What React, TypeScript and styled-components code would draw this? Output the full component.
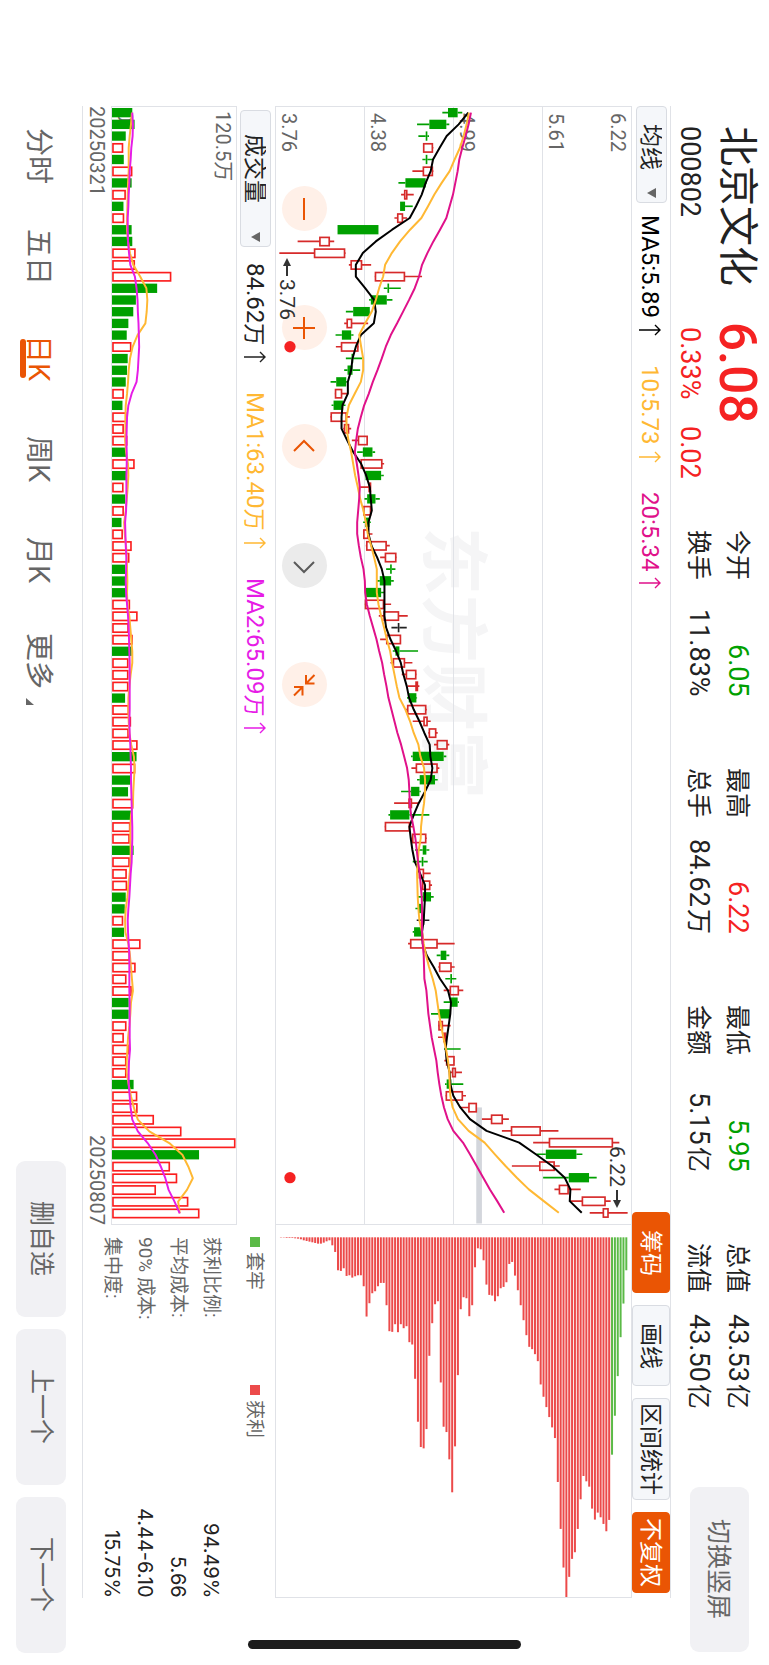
import React from "react";
import styled, { createGlobalStyle } from "styled-components";

const GlobalStyle = createGlobalStyle`
  *, *::before, *::after { box-sizing: border-box; }
  html, body { margin: 0; padding: 0; background: #fff; }
  button, select { font: inherit; color: inherit; margin: 0; writing-mode: inherit; text-orientation: inherit; }
`;

const color = {
  ink: "#222",
  grey: "#666",
  line: "#e0e2e7",
  up: "#d62a2a",
  down: "#00a000",
  alert: "#f52222",
  brand: "#ea5504",
  ma5: "#000",
  ma10: "#ffb833",
  ma20: "#e0118a",
  volMa2: "#e61ce6",
  chipUp: "#ec4a4a",
  chipDown: "#5bba47",
};

/* ---------- data ---------- */

type Kind = "g" | "r" | "k";
/* low, body start, body end, high on the price axis */
type Candle = [Kind, number, number, number, number];

const candles: Candle[] = [
  ["g", 517, 534, 563, 577], ["g", 441, 478, 529, 538], ["g", 445, 467, 472, 477], ["r", 459, 461, 487, 490],
  ["g", 457, 467, 472, 490], ["r", 427, 460, 487, 490], ["g", 385, 406, 467, 470], ["r", 393, 404, 410, 431],
  ["g", 390, 390, 405, 428], ["r", 373, 383, 397, 411], ["g", 202, 202, 325, 325], ["r", 82, 149, 177, 192],
  ["r", 27, 133, 223, 226], ["r", 236, 243, 274, 303], ["r", 314, 316, 403, 456], ["g", 341, 352, 357, 392],
  ["g", 297, 302, 350, 367], ["g", 227, 249, 299, 300], ["r", 222, 231, 244, 294], ["g", 196, 215, 243, 250],
  ["r", 197, 214, 263, 265], ["g", 227, 244, 249, 276], ["g", 222, 232, 247, 270], ["g", 181, 198, 228, 232],
  ["r", 194, 196, 214, 231], ["g", 184, 190, 219, 226], ["r", 181, 183, 228, 239], ["r", 219, 223, 235, 243],
  ["r", 245, 265, 291, 293], ["g", 261, 278, 307, 315], ["r", 271, 273, 335, 342], ["g", 284, 286, 333, 341],
  ["r", 270, 297, 301, 302], ["g", 283, 291, 316, 329], ["r", 278, 281, 301, 303], ["g", 279, 285, 298, 302],
  ["r", 279, 281, 293, 307], ["r", 287, 290, 348, 359], ["r", 330, 346, 377, 379], ["g", 348, 360, 365, 376],
  ["g", 319, 329, 363, 371], ["g", 285, 287, 333, 342], ["r", 284, 286, 340, 363], ["r", 326, 342, 385, 413],
  ["k", 364, 383, 388, 410], ["r", 330, 350, 391, 392], ["g", 368, 376, 388, 444], ["r", 361, 370, 403, 427],
  ["r", 395, 409, 437, 439], ["r", 413, 438, 442, 448], ["g", 411, 416, 439, 441], ["r", 408, 413, 467, 470],
  ["r", 428, 462, 471, 482], ["r", 475, 478, 497, 503], ["r", 492, 502, 531, 538], ["g", 423, 428, 521, 529],
  ["r", 424, 439, 501, 508], ["g", 441, 449, 495, 503], ["g", 393, 423, 448, 452], ["r", 372, 417, 424, 446],
  ["g", 355, 360, 418, 478], ["r", 344, 346, 418, 429], ["r", 424, 428, 467, 470], ["g", 435, 458, 469, 478],
  ["g", 428, 455, 460, 473], ["r", 447, 448, 460, 482], ["r", 456, 458, 479, 486], ["g", 444, 458, 483, 491],
  ["g", 436, 445, 455, 458], ["k", 440, 459, 463, 478], ["g", 428, 432, 455, 456], ["r", 414, 422, 501, 554],
  ["g", 500, 512, 529, 538], ["r", 505, 509, 543, 554], ["g", 526, 541, 546, 559], ["r", 521, 541, 565, 580],
  ["g", 521, 543, 563, 567], ["g", 483, 507, 540, 541], ["r", 505, 507, 517, 542], ["r", 504, 522, 527, 529],
  ["g", 522, 526, 531, 572], ["r", 523, 530, 552, 553], ["r", 540, 548, 556, 576], ["g", 525, 530, 544, 580],
  ["r", 527, 529, 577, 588], ["r", 570, 597, 619, 620], ["r", 636, 665, 697, 717], ["r", 696, 725, 811, 866],
  ["r", 790, 839, 1028, 1049], ["g", 800, 828, 920, 938], ["r", 726, 810, 853, 870], ["g", 820, 897, 958, 981],
  ["r", 854, 869, 895, 933], ["r", 900, 938, 1006, 1023], ["r", 960, 1001, 1015, 1074],
];

const ma5 = [
  595, 566, 530, 509, 489, 482, 467, 455, 438, 419, 366, 317, 278, 257, 257, 285, 312, 317, 311, 272, 257, 247, 243, 233,
  233, 217, 214, 214, 231, 249, 273, 288, 299, 302, 305, 295, 295, 304, 321, 335, 343, 343, 343, 343, 348, 361, 378, 392,
  400, 410, 417, 431, 448, 463, 479, 481, 487, 482, 465, 446, 431, 418, 422, 427, 434, 450, 465, 465, 463, 461, 456, 458,
  470, 491, 510, 534, 543, 541, 536, 531, 527, 530, 539, 541, 550, 571, 600, 650, 748, 798, 847, 885, 902, 900, 936,
];
const ma10 = [
  597, 590, 581, 570, 554, 539, 515, 493, 474, 454, 420, 390, 365, 345, 339, 327, 317, 305, 285, 267, 273, 279, 279, 272,
  254, 236, 229, 229, 235, 243, 249, 255, 263, 270, 280, 287, 293, 303, 312, 320, 320, 320, 325, 333, 342, 350, 360, 366,
  373, 380, 388, 406, 420, 431, 445, 451, 462, 465, 465, 462, 457, 453, 452, 446, 443, 441, 442, 443, 445, 448, 456, 461,
  468, 477, 488, 497, 502, 507, 513, 520, 528, 534, 538, 539, 541, 548, 564, 596, 644, 675, 707, 741, 777, 822, 867,
];
const ma20 = [
  603, 596, 587, 577, 568, 563, 556, 549, 539, 529, 510, 490, 472, 456, 447, 434, 417, 399, 381, 362, 347, 335, 322, 308,
  296, 282, 272, 263, 258, 254, 260, 265, 269, 267, 264, 261, 261, 266, 272, 280, 284, 285, 290, 299, 309, 319, 327, 336,
  342, 349, 355, 364, 373, 382, 393, 402, 411, 416, 418, 419, 423, 430, 436, 440, 444, 449, 452, 455, 456, 456, 456, 458,
  461, 462, 463, 469, 472, 475, 480, 485, 492, 499, 503, 508, 514, 522, 533, 550, 579, 600, 620, 640, 660, 682, 703,
];

const volumeKinds =
  "gggrgrgrgrgg" + "rrrggggg" + "rgggrgrrrgrg" + "rgrgrrrgggrrrrgrrrgrrrrgrggrgrrg" + "rrrggrgrrrrrggrrrrrgrrrrrgrrrrr";
const volumes = [
  395, 402, 375, 367, 369, 395, 393, 375, 368, 370, 393, 395,
  405, 403, 514, 471, 406, 398, 383, 378,
  392, 381, 379, 375, 369, 365, 377, 369, 380, 377, 402, 376,
  368, 373, 369, 362, 366, 393, 386, 373, 375, 375, 388, 411, 384, 396, 393, 383, 383, 383, 373, 385, 391, 384, 411, 408,
  404, 389, 382, 398, 393, 389, 387, 399,
  387, 378, 379, 375, 372, 367, 370, 420, 388, 405, 377, 393, 384, 384, 377, 369, 384, 377, 377, 399, 410, 411, 461, 545,
  710, 599, 510, 532, 467, 566, 600,
];
const volMa1 = [
  394, 391, 387, 384, 384, 384, 382, 381, 380, 379, 379, 382, 388, 398, 419, 438, 441, 439, 435, 411, 396, 388, 384, 382,
  379, 375, 374, 374, 373, 376, 382, 383, 381, 378, 375, 370, 372, 376, 378, 379, 380, 379, 380, 386, 389, 392, 395, 395,
  390, 386, 383, 383, 384, 386, 392, 400, 402, 400, 398, 397, 391, 389, 389, 390, 390, 387, 383, 380, 375, 373, 374, 383,
  388, 391, 394, 397, 391, 389, 386, 382, 380, 378, 378, 384, 391, 400, 412, 447, 508, 548, 566, 580, 562, 535, 540,
];
const volMa2 = [
  395, 397, 396, 392, 390, 387, 386, 384, 383, 381, 381, 382, 385, 389, 403, 408, 411, 412, 414, 415, 416, 414, 412, 408,
  393, 383, 379, 378, 377, 378, 378, 377, 377, 377, 376, 373, 374, 375, 377, 376, 375, 376, 379, 382, 384, 385, 386, 387,
  387, 387, 387, 387, 386, 387, 389, 390, 391, 391, 392, 393, 394, 395, 395, 394, 393, 390, 388, 386, 383, 381, 382, 384,
  386, 386, 386, 386, 387, 387, 387, 387, 388, 385, 384, 384, 387, 390, 395, 412, 442, 466, 482, 496, 506, 524, 540,
];

/* share held at each price, from the highest price down */
const chips = [
  150, 250, 351, 468, 587, 704, 900, 934, 912, 892, 878, 899, 866, 800, 784, 768, 838, 927, 997, 1017, 1071, 1132, 1043,
  927, 786, 654, 622, 591, 561, 530, 493, 423, 402, 387, 380, 345, 300, 255, 210, 166, 125, 131, 186, 200, 204, 228, 243,
  226, 224, 193, 120, 87, 84, 141, 255, 288, 234, 231, 267, 465, 679, 817, 718, 636, 620, 487, 243, 252, 309, 407, 627,
  685, 681, 605, 476, 373, 366, 318, 324, 312, 336, 312, 335, 333, 255, 188, 188, 198, 213, 219, 249, 289, 198, 165, 165,
  168, 172, 165, 167, 144, 152, 150, 95, 75, 60, 63, 67, 70, 70, 68, 66, 64, 62, 60, 57, 55, 54, 53, 53, 53, 52, 52,
];

const stats = [
  { label: "今开", value: "6.05", tone: color.down },
  { label: "最高", value: "6.22", tone: color.alert },
  { label: "最低", value: "5.95", tone: color.down },
  { label: "总值", value: "43.53", unit: "亿" },
  { label: "换手", value: "11.83%" },
  { label: "总手", value: "84.62", unit: "万" },
  { label: "金额", value: "5.15", unit: "亿" },
  { label: "流值", value: "43.50", unit: "亿" },
];

const costs = [
  ["获利比例:", "94.49%"],
  ["平均成本:", "5.66"],
  ["90% 成本:", "4.44-6.10"],
  ["集中度:", "15.75%"],
];

/* ---------- landscape screen, read with the device turned ---------- */

const Screen = styled.div`
  writing-mode: vertical-rl;
  text-orientation: sideways;
  position: relative;
  display: flex;
  flex-direction: column;
  inline-size: 100vh;
  block-size: 100vw;
  overflow: hidden;
  background: #fff;
  color: ${color.ink};
  font-family: Roboto, "Noto Sans CJK SC", sans-serif;
  font-size: 24px;
  line-height: 1;
`;

const Header = styled.header`
  display: flex;
  flex: none;
  block-size: 98px;
  padding-inline: 126px 13px;
`;

const Quote = styled.div`
  display: grid;
  grid-template-columns: auto auto;
  grid-template-rows: 60px 36px;
  column-gap: 36px;
  align-items: center;
  padding-block-start: 2px;
  white-space: nowrap;
`;

const StockName = styled.h1`
  margin: 0;
  font-size: 40px;
  font-weight: 400;
`;

const Price = styled.strong`
  color: ${color.alert};
  font-size: 51px;
  font-weight: 500;
`;

const Code = styled.span`
  font-size: 27px;
`;

const Change = styled.span`
  display: flex;
  gap: 27px;
  padding-inline-start: 5px;
  color: ${color.alert};
  font-size: 27px;
`;

const Stats = styled.dl`
  flex: 1;
  display: grid;
  grid-template-columns: repeat(4, 1fr);
  grid-auto-rows: 39px;
  column-gap: 71px;
  margin: 0;
  margin-inline: 51px 78px;
  padding-block-start: 12px;
`;

const Stat = styled.div`
  display: flex;
  align-items: center;
  justify-content: space-between;
  white-space: nowrap;
`;

const StatLabel = styled.dt`
  font-size: 25px;
`;

const StatValue = styled.dd<{ $tone?: string }>`
  margin: 0;
  color: ${(p) => p.$tone ?? "inherit"};
  font-size: 27px;
`;

const Unit = styled.span<{ $size: number }>`
  font-size: ${(p) => p.$size}px;
  ${StatValue} & {
    margin-inline-start: 2px;
  }
`;

const SoftButton = styled.button<{ $size: number }>`
  flex: none;
  inline-size: ${(p) => p.$size}px;
  padding: 0;
  border: 0;
  border-radius: 9px;
  background: #f1f1f4;
  color: ${color.grey};
  font-size: 25px;
`;

const RotateButton = styled(SoftButton)`
  block-size: 59px;
  padding-block-start: 3px;
  margin-block-start: 20px;
`;

const Board = styled.main`
  flex: 1;
  display: flex;
  flex-direction: column;
  margin-inline: 106px 67px;
  border-block: 1px solid ${color.line};
  min-block-size: 0;
`;

const Toolbar = styled.div`
  flex: none;
  display: flex;
  align-items: center;
  block-size: 38px;
  padding-inline-end: 5px;
`;

const Picker = styled.label`
  position: relative;
  display: block;
  flex: none;
`;

const PickerSelect = styled.select<{ $size: number; $pad: number }>`
  appearance: none;
  display: block;
  inline-size: ${(p) => p.$size}px;
  block-size: 31px;
  padding: 0;
  padding-inline-start: ${(p) => p.$pad}px;
  padding-block-start: 4px;
  border: 1px solid #d9dce2;
  border-radius: 4px;
  background: #f5f7fa;
  font-size: 23px;
`;

const PickerMark = styled.svg`
  position: absolute;
  inset-inline-end: 5px;
  inset-block-start: 11px;
  width: 9px;
  height: 10px;
  pointer-events: none;
`;

const Averages = styled.div<{ $start: number }>`
  flex: 1;
  display: flex;
  align-items: center;
  gap: 29px;
  margin-inline-start: ${(p) => p.$start}px;
  padding-block-start: 2px;
  white-space: nowrap;
`;

const Average = styled.span<{ $tone: string }>`
  display: flex;
  align-items: center;
  gap: 6px;
  color: ${(p) => p.$tone};
`;

const Tools = styled.div`
  display: flex;
  gap: 12px;
`;

const ToolButton = styled.button<{ $active?: boolean; $size: number }>`
  inline-size: ${(p) => p.$size}px;
  block-size: 38px;
  padding: 0;
  padding-block-start: 2px;
  border: 1px solid ${(p) => (p.$active ? color.brand : "#d9dce2")};
  border-radius: 4px;
  background: ${(p) => (p.$active ? color.brand : "#f5f7fa")};
  color: ${(p) => (p.$active ? "#fff" : color.ink)};
  font-size: 23px;
`;

const PricePanel = styled.section`
  flex: 356 1 0;
  display: grid;
  grid-template-columns: 3fr 1fr;
  border: 1px solid ${color.line};
  min-block-size: 0;
`;

const Plot = styled.div<{ $divided?: boolean }>`
  position: relative;
  min-inline-size: 0;
  min-block-size: 0;
  border-inline-end: ${(p) => (p.$divided ? `1px solid ${color.line}` : "0")};
`;

const Drawing = styled.svg`
  position: absolute;
  inset: 0;
  width: 100%;
  height: 100%;
  pointer-events: none;
`;

const Bands = styled.div`
  position: absolute;
  inset: 0;
  display: flex;
  flex-direction: column;
`;

const Band = styled.div`
  flex: 1;
  display: flex;
  flex-direction: column;
  justify-content: flex-end;
  padding-inline-start: 6px;
  color: ${color.grey};
  font-size: 20px;
  line-height: 26px;
  &:not(:last-child) {
    border-block-end: 1px solid ${color.line};
  }
`;

const TopLabel = styled.span`
  margin-block-end: auto;
`;

const Watermark = styled.div`
  position: absolute;
  inset-inline-start: 37.6%;
  inset-block-start: 39%;
  color: #f5f5f6;
  font-family: "Noto Sans CJK SC", sans-serif;
  font-size: 68px;
  font-weight: 700;
  line-height: 68px;
  white-space: nowrap;
`;

const Extreme = styled.span<{ $x: string; $y: string }>`
  position: absolute;
  inset-inline-start: ${(p) => p.$x};
  inset-block-start: ${(p) => p.$y};
  display: flex;
  align-items: center;
  gap: 3px;
  color: #333;
  font-size: 21px;
`;

const Controls = styled.div`
  position: absolute;
  inset-inline-start: 79px;
  inset-block-end: 6px;
  display: flex;
  gap: 74px;
`;

const RoundButton = styled.button<{ $muted?: boolean }>`
  display: flex;
  align-items: center;
  justify-content: center;
  inline-size: 45px;
  block-size: 45px;
  padding: 0;
  border: 0;
  border-radius: 50%;
  background: ${(p) => (p.$muted ? "#ebebeb" : "#fff0e8")};
  color: ${(p) => (p.$muted ? "#5a5a5a" : color.brand)};
`;

const VolumeHead = styled.div`
  flex: none;
  display: grid;
  grid-template-columns: 3fr 1fr;
  align-items: center;
  block-size: 38px;
`;

const VolumeTitle = styled.div`
  display: flex;
  align-items: center;
  padding-inline-start: 4px;
`;

const Legend = styled.div`
  display: flex;
  gap: 95px;
  padding-inline-start: 12px;
  padding-block-start: 2px;
  color: ${color.grey};
  font-size: 19px;
`;

const LegendItem = styled.span<{ $tone: string }>`
  display: flex;
  align-items: center;
  gap: 5px;
  white-space: nowrap;
  &::before {
    content: "";
    inline-size: 10px;
    block-size: 10px;
    background: ${(p) => p.$tone};
  }
`;

const VolumePanel = styled.section`
  flex: 154 1 0;
  display: grid;
  grid-template-columns: 3fr 1fr;
  min-block-size: 0;
`;

const VolumeColumn = styled.div`
  display: flex;
  flex-direction: column;
  min-inline-size: 0;
  color: ${color.grey};
  font-size: 20px;
`;

const VolumePlot = styled(Plot)`
  flex: 1;
  display: flex;
  flex-direction: column;
  justify-content: space-between;
  padding-inline-start: 4px;
  border: 1px solid ${color.line};
  line-height: 26px;
`;

const Dates = styled.div`
  display: flex;
  justify-content: space-between;
  align-items: center;
  block-size: 28px;
`;

const Costs = styled.dl`
  display: grid;
  grid-auto-rows: 33px;
  margin: 0;
  padding-inline-start: 12px;
  padding-block-start: 9px;
`;

const Cost = styled.div`
  display: flex;
  align-items: center;
  justify-content: space-between;
`;

const CostLabel = styled.dt`
  color: ${color.grey};
  font-size: 19px;
`;

const CostValue = styled.dd`
  margin: 0;
  font-family: Inter, sans-serif;
  font-size: 20px;
`;

const Footer = styled.footer`
  flex: none;
  display: flex;
  align-items: center;
  justify-content: space-between;
  block-size: 82px;
  padding-inline: 106px 12px;
`;

const Tabs = styled.nav`
  display: flex;
`;

const Tab = styled.button<{ $active?: boolean }>`
  position: relative;
  inline-size: 101px;
  block-size: 50px;
  padding: 0;
  padding-block-start: 4px;
  border: 0;
  background: none;
  color: ${(p) => (p.$active ? color.brand : color.grey)};
  font-family: Inter, "Noto Sans CJK SC", sans-serif;
  font-size: 28px;
  white-space: nowrap;
  &::after {
    content: "";
    display: ${(p) => (p.$active ? "block" : "none")};
    position: absolute;
    inset-inline-start: 31px;
    inset-block-end: 4px;
    inline-size: 39px;
    block-size: 6px;
    border-radius: 3px;
    background: ${color.brand};
  }
`;

const Corner = styled.svg`
  position: absolute;
  inset-inline-end: 7px;
  inset-block-end: 10px;
  width: 8px;
  height: 7px;
`;

const Pager = styled.div`
  display: flex;
  gap: 12px;
  ${SoftButton} {
    block-size: 50px;
  }
`;

const HomeIndicator = styled.div`
  position: absolute;
  inset-inline-end: 16px;
  inset-block: 32.2%;
  inline-size: 9px;
  border-radius: 5px;
  background: #1c1c1c;
`;

/* ---------- drawings ---------- */

const rowAt = (i: number) => 17 + i * 35.19;
const trace = (values: number[]) => values.map((v, i) => `${v},${rowAt(i).toFixed(1)}`).join(" ");
const fills: Record<Kind, string> = { g: color.down, r: color.up, k: "#222" };

const CandleMark = ({ candle, index }: { candle: Candle; index: number }) => {
  const [kind, low, start, end, high] = candle;
  const y = rowAt(index);
  const fill = fills[kind];
  return (
    <g stroke={fill}>
      <path d={`M${low} ${y}H${start}M${end} ${y}H${high}`} strokeWidth="5" />
      {kind === "r" ? (
        <rect x={start} y={y - 12} width={end - start} height="25" fill="none" strokeWidth="5" />
      ) : (
        <rect x={start} y={y - 14} width={end - start} height="28" fill={fill} stroke="none" />
      )}
    </g>
  );
};

const PriceDrawing = () => (
  <Drawing viewBox="17 0 1068 3357" preserveAspectRatio="none" fill="none" aria-hidden="true">
    <rect x="619" y="3008" width="17" height="349" fill="#d3d6dc" />
    {candles.map((c, i) => (
      <CandleMark key={i} candle={c} index={i} />
    ))}
    <g strokeWidth="6" strokeLinejoin="round">
      <polyline points={trace(ma5)} stroke={color.ma5} />
      <polyline points={trace(ma10)} stroke={color.ma10} />
      <polyline points={trace(ma20)} stroke={color.ma20} />
    </g>
    <circle cx="59" cy={rowAt(20)} r="17" fill={color.alert} />
    <circle cx="59" cy={rowAt(91)} r="17" fill={color.alert} />
  </Drawing>
);

const VolumeDrawing = () => (
  <Drawing viewBox="333 0 378 3357" preserveAspectRatio="none" fill="none" aria-hidden="true">
    {volumes.map((v, i) =>
      volumeKinds[i] === "g" ? (
        <rect key={i} x="333" y={rowAt(i) - 14} width={v - 333} height="28" fill={color.down} />
      ) : (
        <rect key={i} x="336" y={rowAt(i) - 12} width={v - 338} height="25" stroke="#fb1e1e" strokeWidth="5" />
      ),
    )}
    <g strokeWidth="6" strokeLinejoin="round">
      <polyline points={trace(volMa1)} stroke={color.ma10} />
      <polyline points={trace(volMa2)} stroke={color.volMa2} />
    </g>
  </Drawing>
);

const ChipDrawing = () => (
  <Drawing viewBox="107 14 1068 1119" preserveAspectRatio="none" aria-hidden="true">
    {chips.map((end, i) => (
      <rect
        key={i}
        x={1157 - i * 8.58}
        y="51"
        width="6"
        height={end - 51}
        fill={i < 6 ? color.chipDown : color.chipUp}
      />
    ))}
  </Drawing>
);

const RiseArrow = () => (
  <svg width="22" height="12" viewBox="0 0 22 12" fill="none" stroke="currentColor" strokeWidth="1.4" aria-hidden="true">
    <path d="M0 6H21M16 1L21 6L16 11" />
  </svg>
);

const PointArrow = ({ up }: { up?: boolean }) => (
  <svg width="8" height="18" viewBox="0 0 8 18" aria-hidden="true">
    <path d={up ? "M4 18V6" : "M4 0V12"} stroke="#333" strokeWidth="2" />
    <path d={up ? "M0 8L4 0L8 8Z" : "M0 10L4 18L8 10Z"} fill="#333" />
  </svg>
);

const glyphs: Record<string, string> = {
  minus: "M12 1V23",
  plus: "M12 1V23M1 12H23",
  prev: "M2 16L12 6L22 16",
  next: "M2 8L12 18L22 8",
  shrink: "M22.5 2L14 10.5M14 2V10.5H22.5M2 22.5L10.5 14M2 14H10.5V22.5",
};

const Glyph = ({ name }: { name: string }) => (
  <svg width="24" height="24" viewBox="0 0 24 24" fill="none" stroke="currentColor" strokeWidth="2" aria-hidden="true">
    <path d={glyphs[name]} />
  </svg>
);

const Dropdown = ({ name, value, size, pad }: { name: string; value: string; size: number; pad: number }) => (
  <Picker>
    <PickerSelect aria-label={name} defaultValue={value} $size={size} $pad={pad}>
      <option>{value}</option>
    </PickerSelect>
    <PickerMark viewBox="0 0 9 10" aria-hidden="true">
      <path d="M9 0V10L0 5Z" fill={color.grey} />
    </PickerMark>
  </Picker>
);

export default function App() {
  return (
    <>
      <GlobalStyle />
      <Screen>
        <Header>
          <Quote>
            <StockName>北京文化</StockName>
            <Price>6.08</Price>
            <Code>000802</Code>
            <Change>
              <span>0.33%</span>
              <span>0.02</span>
            </Change>
          </Quote>
          <Stats>
            {stats.map((s) => (
              <Stat key={s.label}>
                <StatLabel>{s.label}</StatLabel>
                <StatValue $tone={s.tone}>
                  {s.value}
                  {s.unit && <Unit $size={25}>{s.unit}</Unit>}
                </StatValue>
              </Stat>
            ))}
          </Stats>
          <RotateButton $size={165}>切换竖屏</RotateButton>
        </Header>

        <Board>
          <Toolbar>
            <Dropdown name="主图指标" value="均线" size={97} pad={17} />
            <Averages $start={12}>
              <Average $tone={color.ma5}>MA5:5.89<RiseArrow /></Average>
              <Average $tone={color.ma10}>10:5.73<RiseArrow /></Average>
              <Average $tone={color.ma20}>20:5.34<RiseArrow /></Average>
            </Averages>
            <Tools>
              <ToolButton $size={81} $active>筹码</ToolButton>
              <ToolButton $size={81}>画线</ToolButton>
              <ToolButton $size={102}>区间统计</ToolButton>
              <ToolButton $size={81} $active>不复权</ToolButton>
            </Tools>
          </Toolbar>

          <PricePanel>
            <Plot $divided>
              <Watermark>东方财富</Watermark>
              <Bands>
                <Band>
                  <TopLabel>6.22</TopLabel>
                  <span>5.61</span>
                </Band>
                <Band>4.99</Band>
                <Band>4.38</Band>
                <Band>3.76</Band>
              </Bands>
              <Controls>
                <RoundButton aria-label="缩小"><Glyph name="minus" /></RoundButton>
                <RoundButton aria-label="放大"><Glyph name="plus" /></RoundButton>
                <RoundButton aria-label="前移"><Glyph name="prev" /></RoundButton>
                <RoundButton aria-label="后移" $muted><Glyph name="next" /></RoundButton>
                <RoundButton aria-label="收起"><Glyph name="shrink" /></RoundButton>
              </Controls>
              <PriceDrawing />
              <Extreme $x="13.5%" $y="94%"><PointArrow up />3.76</Extreme>
              <Extreme $x="93.1%" $y="1%">6.22<PointArrow /></Extreme>
            </Plot>
            <Plot>
              <ChipDrawing />
            </Plot>
          </PricePanel>

          <VolumeHead>
            <VolumeTitle>
              <Dropdown name="副图指标" value="成交量" size={137} pad={23} />
              <Averages $start={16}>
                <Average $tone={color.ink}><span>84.62<Unit $size={22}>万</Unit></span><RiseArrow /></Average>
                <Average $tone={color.ma10}><span>MA1:63.40<Unit $size={22}>万</Unit></span><RiseArrow /></Average>
                <Average $tone={color.volMa2}><span>MA2:65.09<Unit $size={22}>万</Unit></span><RiseArrow /></Average>
              </Averages>
            </VolumeTitle>
            <Legend>
              <LegendItem $tone={color.chipDown}>套牢</LegendItem>
              <LegendItem $tone={color.chipUp}>获利</LegendItem>
            </Legend>
          </VolumeHead>

          <VolumePanel>
            <VolumeColumn>
              <VolumePlot>
                <VolumeDrawing />
                <span>120.5万</span>
                <span>0</span>
              </VolumePlot>
              <Dates>
                <time dateTime="2025-03-21">20250321</time>
                <time dateTime="2025-08-07">20250807</time>
              </Dates>
            </VolumeColumn>
            <Costs>
              {costs.map(([label, value]) => (
                <Cost key={label}>
                  <CostLabel>{label}</CostLabel>
                  <CostValue>{value}</CostValue>
                </Cost>
              ))}
            </Costs>
          </VolumePanel>
        </Board>

        <Footer>
          <Tabs>
            <Tab>分时</Tab>
            <Tab>五日</Tab>
            <Tab $active>日K</Tab>
            <Tab>周K</Tab>
            <Tab>月K</Tab>
            <Tab>
              更多
              <Corner viewBox="0 0 8 7" aria-hidden="true">
                <path d="M0 0V7H8Z" fill={color.grey} />
              </Corner>
            </Tab>
          </Tabs>
          <Pager>
            <SoftButton $size={156}>删自选</SoftButton>
            <SoftButton $size={156}>上一个</SoftButton>
            <SoftButton $size={156}>下一个</SoftButton>
          </Pager>
        </Footer>
        <HomeIndicator />
      </Screen>
    </>
  );
}
